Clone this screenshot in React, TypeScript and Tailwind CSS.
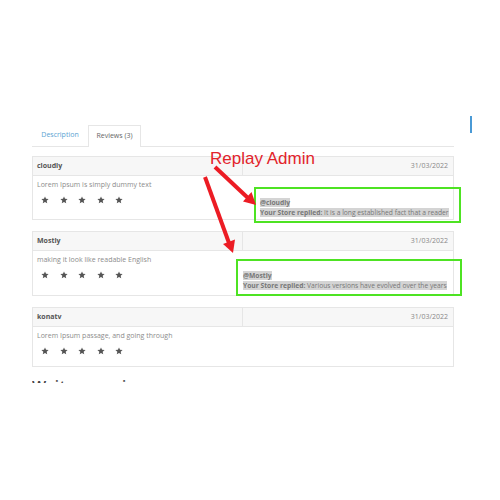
import React from "react";

const font = { fontFamily: "'Open Sans', 'Liberation Sans', sans-serif" };

const Stars = () => (
  <div className="flex gap-[10.5px] pl-[4px]">
    {[0, 1, 2, 3, 4].map((i) => (
      <svg key={i} width="8" height="8" viewBox="0 0 24 24">
        <path
          d="M12 1.5l3.1 7.1 7.7.7-5.8 5.1 1.7 7.6L12 18l-6.7 4 1.7-7.6-5.8-5.1 7.7-.7z"
          fill="#555"
        />
      </svg>
    ))}
  </div>
);

type ReviewProps = {
  name: string;
  text: string;
  bodyH: string;
  className?: string;
};

const Review = ({ name, text, bodyH, className }: ReviewProps) => (
  <div className={`border border-[#e6e6e6] ${className ?? ""}`}>
    {/* header row */}
    <div className="flex h-[19px] bg-[#f7f7f7] border-b border-[#e6e6e6]">
      <div className="w-[210px] border-r border-[#e6e6e6] flex items-center pl-[4px] text-[7px] font-bold text-[#555]">
        {name}
      </div>
      <div className="flex-1 flex items-center justify-end pr-[5px] text-[7px] text-[#888]">
        31/03/2022
      </div>
    </div>
    <div className={`${bodyH} pl-[4px] pt-[4px] text-[7px] text-[#8c8c8c]`}>
      <div>{text}</div>
      <div className="mt-[5px]">
        <Stars />
      </div>
    </div>
  </div>
);

const Reply = ({ user, text }: { user: string; text: string }) => (
  <div className="text-[6.7px] leading-[10px] text-[#777]">
    <div>
      <span className="bg-[#d4d4d4] font-bold">@{user}</span>
    </div>
    <div>
      <span className="bg-[#d4d4d4]">
        <b>Your Store replied:</b> {text}
      </span>
    </div>
  </div>
);

export default function App() {
  return (
    <div className="relative w-[500px] h-[500px] bg-white overflow-hidden" style={font}>
      <div className="pt-[125px] pl-[32px] w-[454px]">
        {/* tabs */}
        <div className="flex items-end h-[22px] border-b border-[#e6e6e6]">
          <div className="w-[56px] h-[21px] flex items-center justify-center text-[7px] text-[#5aa3d2]">
            Description
          </div>
          <div className="w-[53px] h-[22px] -mb-px bg-white border border-b-0 border-[#e6e6e6] flex items-center justify-center text-[7px] text-[#666]">
            Reviews (3)
          </div>
        </div>

        <Review
          className="mt-[9px]"
          name="cloudly"
          text="Lorem Ipsum is simply dummy text"
          bodyH="h-[43px]"
        />
        <Review
          className="mt-[11px]"
          name="Mostly"
          text="making it look like readable English"
          bodyH="h-[44px]"
        />
        <Review
          className="mt-[11px]"
          name="konatv"
          text="Lorem Ipsum passage, and going through"
          bodyH="h-[39px]"
        />

        {/* heading below, mostly hidden in the shot */}
        <div className="mt-[11px] h-[5px] overflow-hidden">
          <div className="text-[15px] leading-[14px] font-semibold text-[#444] tracking-[1px]">
            Write a review
          </div>
        </div>
      </div>

      {/* blue scrollbar marker */}
      <div className="absolute left-[470px] top-[116px] w-[2px] h-[17px] bg-[#4a9ad6]" />

      {/* annotation: green reply boxes */}
      <div className="absolute left-[254px] top-[187px] w-[207px] h-[36px] border-[2px] border-[#4ee323] pl-[4px] pt-[9px]">
        <Reply user="cloudly" text="It is a long established fact that a reader" />
      </div>
      <div className="absolute left-[236px] top-[259px] w-[226px] h-[37px] border-[2px] border-[#4ee323] pl-[5px] pt-[10px]">
        <Reply user="Mostly" text="Various versions have evolved over the years" />
      </div>

      {/* annotation label */}
      <div
        className="absolute left-[210px] top-[149px] text-[17px] leading-[20px] text-[#e3232b]"
        style={{ fontFamily: "'Liberation Sans', Arial, sans-serif" }}
      >
        Replay Admin
      </div>

      {/* annotation arrows */}
      <svg className="absolute inset-0" width="500" height="500" viewBox="0 0 500 500">
        <line x1="215" y1="167" x2="248" y2="198" stroke="#ec1c24" strokeWidth="4" />
        <polygon points="256,205 243,201.5 251.5,192" fill="#ec1c24" />
        <line x1="205" y1="177" x2="229" y2="243" stroke="#ec1c24" strokeWidth="4" />
        <polygon points="233,253 223,244 235,239.5" fill="#ec1c24" />
      </svg>
    </div>
  );
}
